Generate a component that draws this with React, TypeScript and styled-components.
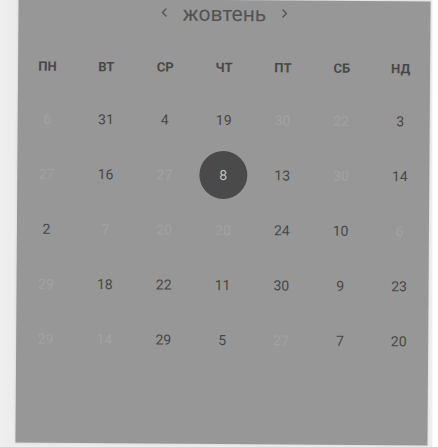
import React from "react";
import styled, { createGlobalStyle } from "styled-components";

const Global = createGlobalStyle`
  html, body { margin: 0; padding: 0; }
  body {
    background: linear-gradient(to right, #efefef 0, #ebebeb 16px, #efefef 432px, #ffffff 433px);
    font-family: Roboto, "Liberation Sans", Arial, sans-serif;
    overflow: hidden;
    width: 438px;
    height: 447px;
  }
`;

const Stage = styled.div`
  padding-left: 17px;
  padding-top: 0;
`;

const Panel = styled.div`
  width: 412px;
  height: 444px;
  background: #979797;
  transform: rotate(0.4deg);
  transform-origin: 50% 50%;
  box-shadow: 0 0 3px rgba(0, 0, 0, 0.12);
  display: flex;
  flex-direction: column;
  box-sizing: border-box;
`;

const Header = styled.div`
  height: 28px;
  display: flex;
  align-items: center;
  justify-content: center;
  gap: 14px;
  color: #535353;
`;

const Month = styled.span`
  font-size: 21px;
  line-height: 28px;
  color: #535353;
`;

const NavButton = styled.span`
  display: inline-flex;
  width: 10px;
  height: 12px;
  align-items: center;
  justify-content: center;
  margin-top: -3px;
`;

const Weekdays = styled.div`
  margin-top: 29px;
  display: grid;
  grid-template-columns: repeat(7, 1fr);
  height: 20px;
  align-items: center;
`;

const Weekday = styled.div`
  text-align: center;
  font-size: 13px;
  font-weight: 700;
  color: #484848;
`;

const Days = styled.div`
  margin-top: 15px;
  display: grid;
  grid-template-columns: repeat(7, 1fr);
  grid-auto-rows: 55px;
`;

const DayCell = styled.div`
  display: flex;
  align-items: center;
  justify-content: center;
`;

const Day = styled.span<{ $muted?: boolean; $selected?: boolean }>`
  display: flex;
  align-items: center;
  justify-content: center;
  width: 48px;
  height: 48px;
  border-radius: 50%;
  font-size: 14px;
  color: ${(p) => (p.$selected ? "#c2c2c2" : p.$muted ? "#a2a2a2" : "#474747")};
  background: ${(p) => (p.$selected ? "#4a4a4a" : "transparent")};
`;

const Chevron = ({ dir }: { dir: "left" | "right" }) => (
  <svg width="7" height="10" viewBox="0 0 7 10" fill="none">
    <path
      d={dir === "left" ? "M5.5 1.5 L2 5 L5.5 8.5" : "M1.5 1.5 L5 5 L1.5 8.5"}
      stroke="#555"
      strokeWidth="1.4"
      strokeLinecap="round"
      strokeLinejoin="round"
    />
  </svg>
);

const weekdays = ["ПН", "ВТ", "СР", "ЧТ", "ПТ", "СБ", "НД"];

type D = { n: number; m?: boolean; s?: boolean };
const days: D[] = [
  { n: 6, m: true }, { n: 31 }, { n: 4 }, { n: 19 }, { n: 30, m: true }, { n: 22, m: true }, { n: 3 },
  { n: 27, m: true }, { n: 16 }, { n: 27, m: true }, { n: 8, s: true }, { n: 13 }, { n: 30, m: true }, { n: 14 },
  { n: 2 }, { n: 7, m: true }, { n: 20, m: true }, { n: 20, m: true }, { n: 24 }, { n: 10 }, { n: 6, m: true },
  { n: 29, m: true }, { n: 18 }, { n: 22 }, { n: 11 }, { n: 30 }, { n: 9 }, { n: 23 },
  { n: 29, m: true }, { n: 14, m: true }, { n: 29 }, { n: 5 }, { n: 27, m: true }, { n: 7 }, { n: 20 },
];

export default function App() {
  return (
    <>
      <Global />
      <Stage>
        <Panel>
          <Header>
            <NavButton><Chevron dir="left" /></NavButton>
            <Month>жовтень</Month>
            <NavButton><Chevron dir="right" /></NavButton>
          </Header>
          <Weekdays>
            {weekdays.map((w) => (
              <Weekday key={w}>{w}</Weekday>
            ))}
          </Weekdays>
          <Days>
            {days.map((d, i) => (
              <DayCell key={i}>
                <Day $muted={d.m} $selected={d.s}>{d.n}</Day>
              </DayCell>
            ))}
          </Days>
        </Panel>
      </Stage>
    </>
  );
}
